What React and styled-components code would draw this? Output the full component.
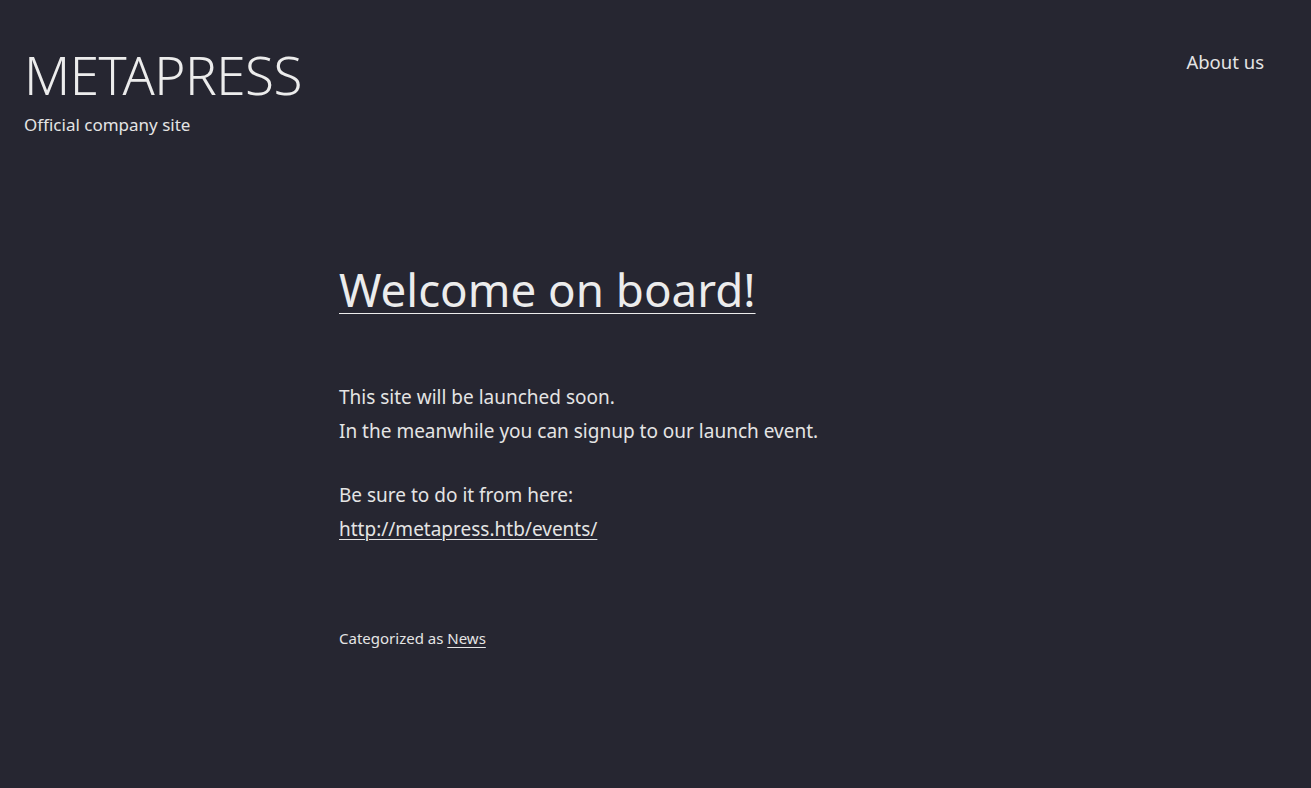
import React from "react"
import styled, { createGlobalStyle } from "styled-components"

const GlobalStyle = createGlobalStyle`
  html, body {
    margin: 0;
    padding: 0;
    background: #262631;
  }
  body {
    font-family: "Noto Sans", "Open Sans", sans-serif;
    color: #e4e4e4;
  }
`

const Page = styled.div`
  min-height: 788px;
  background: #262631;
`

const Header = styled.header`
  display: flex;
  justify-content: space-between;
  align-items: flex-start;
  padding: 44px 47px 0 24px;
`

const Brand = styled.div`
  display: flex;
  flex-direction: column;
`

const SiteTitle = styled.a`
  font-size: 53px;
  line-height: 62px;
  font-weight: 300;
  letter-spacing: -0.5px;
  color: #ececec;
  text-decoration: none;
`

const Tagline = styled.p`
  margin: 7px 0 0 0;
  font-size: 17px;
  line-height: 24px;
  color: #e4e4e4;
`

const Nav = styled.nav`
  padding-top: 6px;
`

const NavLink = styled.a`
  font-size: 18.5px;
  line-height: 24px;
  color: #e4e4e4;
  text-decoration: none;
`

const Main = styled.main`
  width: 633px;
  margin: 0 auto;
  padding-top: 120px;
`

const PostTitle = styled.h1`
  margin: 0;
  font-size: 45.7px;
  line-height: 64px;
  font-weight: 400;

  a {
    color: #ececec;
    text-decoration: underline;
    text-decoration-thickness: 1px;
    text-underline-offset: 6px;
  }
`

const Content = styled.div`
  margin-top: 59px;
  font-size: 19px;
  line-height: 34px;
`

const Para = styled.p`
  margin: 0 0 30px 0;
`

const TextLink = styled.a`
  color: #e4e4e4;
  text-decoration: underline;
  text-decoration-thickness: 1px;
  text-underline-offset: 3px;
`

const Meta = styled.footer`
  margin-top: 81px;
  font-size: 15px;
  line-height: 22px;
  color: #e4e4e4;
`

export default function App() {
  return (
    <Page>
      <GlobalStyle />
      <Header>
        <Brand>
          <SiteTitle href="#">METAPRESS</SiteTitle>
          <Tagline>Official company site</Tagline>
        </Brand>
        <Nav>
          <NavLink href="#">About us</NavLink>
        </Nav>
      </Header>
      <Main>
        <PostTitle>
          <a href="#">Welcome on board!</a>
        </PostTitle>
        <Content>
          <Para>
            This site will be launched soon.
            <br />
            In the meanwhile you can signup to our launch event.
          </Para>
          <Para>
            Be sure to do it from here:
            <br />
            <TextLink href="#">http://metapress.htb/events/</TextLink>
          </Para>
        </Content>
        <Meta>
          Categorized as <TextLink href="#">News</TextLink>
        </Meta>
      </Main>
    </Page>
  )
}
